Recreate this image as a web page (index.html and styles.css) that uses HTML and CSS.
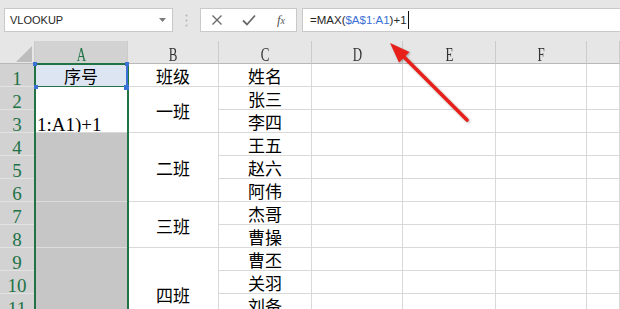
FILE: index.html
```html
<!DOCTYPE html>
<html lang="zh-CN">
<head>
<meta charset="utf-8">
<title>Excel</title>
<link rel="stylesheet" href="styles.css">
</head>
<body>
<div class="app">
  <div class="fbar">
    <div class="namebox">
      <span>VLOOKUP</span>
      <svg class="dd" width="7" height="4" viewBox="0 0 7 4"><path d="M0 0H7L3.5 4Z" fill="#7a7a7a"/></svg>
    </div>
    <div class="grip">
      <svg width="3" height="13" viewBox="0 0 3 13"><circle cx="1.5" cy="1.5" r="1" fill="#b4b4b4"/><circle cx="1.5" cy="6.5" r="1" fill="#b4b4b4"/><circle cx="1.5" cy="11.5" r="1" fill="#b4b4b4"/></svg>
    </div>
    <div class="btns">
      <span class="ico"><svg width="12" height="12" viewBox="0 0 12 12"><path d="M1.5 1.5L10.5 10.5M10.5 1.5L1.5 10.5" stroke="#6a6a6a" stroke-width="1.4" fill="none"/></svg></span>
      <span class="ico"><svg width="14" height="12" viewBox="0 0 14 12"><path d="M1 6.5L5 10.5L13 1.5" stroke="#6a6a6a" stroke-width="1.8" fill="none"/></svg></span>
      <span class="ico fx">f<sub>x</sub></span>
    </div>
    <div class="formula">=MAX(<span class="ref">$A$1:A1</span>)+1<span class="caret"></span></div>
  </div>

  <div class="sheet">
    <div class="grid">
      <div class="ch corner"><svg width="35" height="23" viewBox="0 0 35 23"><path d="M16 21H32V5Z" fill="#bdbdbd"/></svg></div>
      <div class="ch sel"><span class="lt">A</span></div>
      <div class="ch"><span class="lt">B</span></div>
      <div class="ch"><span class="lt">C</span></div>
      <div class="ch"><span class="lt">D</span></div>
      <div class="ch"><span class="lt">E</span></div>
      <div class="ch"><span class="lt">F</span></div>
      <div class="ch"></div>

      <div class="rh">1</div>
      <div class="c a1">序号</div>
      <div class="c">班级</div>
      <div class="c">姓名</div>
      <div class="c"></div><div class="c"></div><div class="c"></div><div class="c"></div>

      <div class="rh">2</div>
      <div class="c edit span2">1:A1)+1</div>
      <div class="c span2">一班</div>
      <div class="c">张三</div>
      <div class="c"></div><div class="c"></div><div class="c"></div><div class="c"></div>

      <div class="rh">3</div>
      <div class="c">李四</div>
      <div class="c"></div><div class="c"></div><div class="c"></div><div class="c"></div>

      <div class="rh">4</div>
      <div class="c asel span3"></div>
      <div class="c span3">二班</div>
      <div class="c">王五</div>
      <div class="c"></div><div class="c"></div><div class="c"></div><div class="c"></div>

      <div class="rh">5</div>
      <div class="c">赵六</div>
      <div class="c"></div><div class="c"></div><div class="c"></div><div class="c"></div>

      <div class="rh">6</div>
      <div class="c">阿伟</div>
      <div class="c"></div><div class="c"></div><div class="c"></div><div class="c"></div>

      <div class="rh">7</div>
      <div class="c asel span2"></div>
      <div class="c span2">三班</div>
      <div class="c">杰哥</div>
      <div class="c"></div><div class="c"></div><div class="c"></div><div class="c"></div>

      <div class="rh">8</div>
      <div class="c">曹操</div>
      <div class="c"></div><div class="c"></div><div class="c"></div><div class="c"></div>

      <div class="rh">9</div>
      <div class="c asel span4"></div>
      <div class="c span4">四班</div>
      <div class="c">曹丕</div>
      <div class="c"></div><div class="c"></div><div class="c"></div><div class="c"></div>

      <div class="rh">10</div>
      <div class="c">关羽</div>
      <div class="c"></div><div class="c"></div><div class="c"></div><div class="c"></div>

      <div class="rh">11</div>
      <div class="c">刘备</div>
      <div class="c"></div><div class="c"></div><div class="c"></div><div class="c"></div>

      <div class="rh">12</div>
      <div class="c">孙权</div>
      <div class="c"></div><div class="c"></div><div class="c"></div><div class="c"></div>
    </div>

    <div class="selection"></div>
    <div class="refbox">
      <span class="hd tl"></span><span class="hd tr"></span><span class="hd bl"></span><span class="hd br"></span>
    </div>
  </div>

  <svg class="arrow" width="620" height="309" viewBox="0 0 620 309">
    <line x1="467" y1="120" x2="403" y2="56" stroke="#e8201a" stroke-width="3.6" stroke-linecap="round"/>
    <path d="M390 43L409.5 52L399 62.5Z" fill="#e8201a"/>
  </svg>
</div>
</body>
</html>
```
FILE: styles.css
```css
html, body {
  margin: 0;
  padding: 0;
  background: #ffffff;
}

.app {
  position: relative;
  width: 620px;
  height: 309px;
  overflow: hidden;
  font-family: "Liberation Sans", Arial, sans-serif;
}

/* ---------- formula bar ---------- */
.fbar {
  display: flex;
  height: 41px;
  box-sizing: border-box;
  padding: 8px 0 9px 4px;
  background: #e6e6e6;
}

.namebox {
  width: 169px;
  box-sizing: border-box;
  border: 1px solid #c9c9c9;
  background: #fff;
  display: flex;
  align-items: center;
  justify-content: space-between;
  padding: 0 6px 0 5px;
  font-size: 11px;
  color: #262626;
}

.grip {
  width: 27px;
  display: flex;
  align-items: center;
  justify-content: center;
}

.btns {
  width: 97px;
  box-sizing: border-box;
  border: 1px solid #c9c9c9;
  background: #fff;
  display: grid;
  grid-template-columns: 16px 16px 16px;
  column-gap: 16px;
  padding-left: 8px;
  align-items: center;
}

.ico {
  display: flex;
  align-items: center;
  justify-content: center;
}

.fx {
  font-family: "Liberation Serif", serif;
  font-style: italic;
  font-size: 13px;
  color: #555;
}

.fx sub {
  font-size: 10px;
  vertical-align: -1px;
}

.formula {
  flex: 1;
  margin-left: 5px;
  box-sizing: border-box;
  border: 1px solid #c9c9c9;
  border-right: none;
  background: #fff;
  display: flex;
  align-items: center;
  padding-left: 7px;
  font-size: 11.5px;
  color: #262626;
  white-space: pre;
}

.ref {
  color: #3b70d4;
}

.caret {
  display: inline-block;
  width: 1px;
  height: 18px;
  margin-left: 1px;
  background: #111;
}

/* ---------- sheet ---------- */
.sheet {
  position: relative;
  height: 268px;
  overflow: hidden;
}

.grid {
  display: grid;
  grid-template-columns: 35px 93px 91px 93px 91px 93px 91px 1fr;
  grid-template-rows: repeat(13, 23px);
}

.ch {
  box-sizing: border-box;
  background: #e6e6e6;
  border-right: 1px solid #cbcbcb;
  border-bottom: 1px solid #b9b9b9;
  text-align: center;
  font-family: "Liberation Serif", serif;
  font-size: 18px;
  line-height: 18px;
  padding-top: 5px;
  color: #333;
}

.ch .lt {
  display: inline-block;
  transform: scaleX(0.72);
}

.ch.sel {
  background: #d2d2d2;
  color: #217346;
}

.corner {
  padding: 0;
  line-height: 0;
}

.rh {
  box-sizing: border-box;
  background: #d2d2d2;
  border-right: 1px solid #b9b9b9;
  border-bottom: 1px solid #e2e2e2;
  color: #217346;
  text-align: center;
  font-family: "Liberation Serif", serif;
  font-size: 19px;
  line-height: 19px;
  padding-top: 5px;
}

.c {
  box-sizing: border-box;
  border-right: 1px solid #d9d9d9;
  border-bottom: 1px solid #d9d9d9;
  display: flex;
  align-items: center;
  justify-content: center;
  font-family: "Noto Sans CJK SC", sans-serif;
  font-size: 17px;
  line-height: 1;
  color: #000;
  padding-top: 1px;
}

.span2 { grid-row: span 2; }
.span3 { grid-row: span 3; }
.span4 { grid-row: span 4; }

.a1 {
  background: #dde5f3;
  border-bottom-color: #217346;
}

.asel {
  background: #c6c6c6;
  border-bottom-color: #dcdcdc;
}

.edit {
  align-items: flex-end;
  justify-content: flex-start;
  padding: 0 0 0 2px;
  font-family: "Liberation Serif", serif;
  font-size: 19px;
  line-height: 15px;
  white-space: nowrap;
  overflow: hidden;
}

/* selection overlays */
.selection {
  position: absolute;
  left: 34px;
  top: 22px;
  width: 95px;
  height: 300px;
  box-sizing: border-box;
  border: 2px solid #217346;
}

.refbox {
  position: absolute;
  left: 35px;
  top: 23px;
  width: 93px;
  height: 23px;
  box-sizing: border-box;
  border-right: 2px solid #3b70d4;
}

.hd {
  position: absolute;
  width: 4px;
  height: 4px;
  background: #3b70d4;
}

.hd.tl { left: -2px; top: -2px; }
.hd.tr { right: -3px; top: -2px; }
.hd.bl { left: -1px; bottom: -2px; }
.hd.br { right: -3px; bottom: -3px; width: 5px; height: 5px; }

.arrow {
  position: absolute;
  left: 0;
  top: 0;
  pointer-events: none;
  filter: drop-shadow(1px 1px 1px rgba(0, 0, 0, 0.3));
}
```
